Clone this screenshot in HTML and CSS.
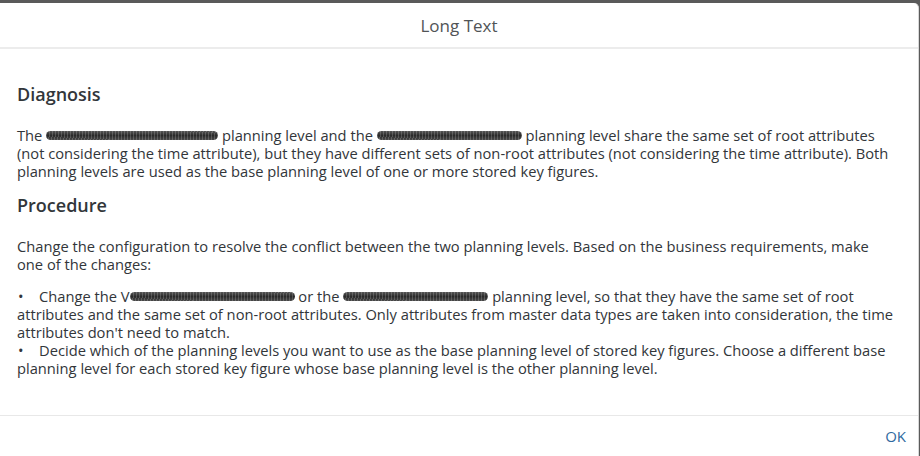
FILE: index.html
```html
<!DOCTYPE html>
<html lang="en">
<head>
  <meta charset="UTF-8">
  <title>Long Text</title>
  <link rel="stylesheet" href="styles.css">
</head>
<body>

  <div class="dialog">
    <div class="dialog-header">
      <h1>Long Text</h1>
    </div>

    <div class="dialog-content">
      <h2>Diagnosis</h2>
      <p>The <span class="redacted r1"></span> planning level and the <span class="redacted r2"></span> planning level share the same set of root attributes (not considering the time attribute), but they have different sets of non-root attributes (not considering the time attribute). Both planning levels are used as the base planning level of one or more stored key figures.</p>

      <h2>Procedure</h2>
      <p>Change the configuration to resolve the conflict between the two planning levels. Based on the business requirements, make one of the changes:</p>

      <ul class="items">
        <li>Change the V<span class="redacted r3"></span> or the <span class="redacted r4"></span> planning level, so that they have the same set of root attributes and the same set of non-root attributes. Only attributes from master data types are taken into consideration, the time attributes don't need to match.</li>
        <li>Decide which of the planning levels you want to use as the base planning level of stored key figures. Choose a different base planning level for each stored key figure whose base planning level is the other planning level.</li>
      </ul>
    </div>

    <div class="dialog-footer">
      <button class="ok-btn">OK</button>
    </div>
  </div>

</body>
</html>
```

FILE: styles.css
```css
body {
  margin: 0;
  background: #5a5a5a;
  font-family: 'Open Sans', 'Noto Sans', sans-serif;
  color: #32363a;
}

.dialog {
  margin-top: 3px;
  width: 918px;
  height: 453px;
  background: white;
  border-right: 1px solid #d8d8d8;
  border-top-right-radius: 5px;
  display: flex;
  flex-direction: column;
}

.dialog-header {
  height: 44px;
  border-bottom: 2px solid #ececec;
  display: flex;
  align-items: center;
  justify-content: center;
}

.dialog-header h1 {
  margin: 0;
  font-size: 17px;
  font-weight: normal;
  color: #515456;
}

.dialog-content {
  flex: 1;
  padding: 29px 23px 0 17px;
  font-size: 14.7px;
  line-height: 18px;
}

.dialog-content h2 {
  margin: 5px 0 21px;
  font-size: 18px;
  line-height: 22px;
  font-weight: 600;
}

.dialog-content p {
  margin: 0 0 14px;
}

.items {
  list-style: none;
  margin: 0;
  padding: 0;
}

.items li::before {
  content: "•";
  display: inline-block;
  width: 21px;
  padding-left: 1px;
}

.redacted {
  display: inline-block;
  height: 9px;
  border-radius: 5px;
  vertical-align: 1px;
  background:
    repeating-linear-gradient(95deg, rgba(255,255,255,0.18) 0, rgba(255,255,255,0.18) 1px, transparent 1px, transparent 3px),
    linear-gradient(#555, #2a2a2a 50%, #4a4a4a);
}

.r1 { width: 172px; }
.r2 { width: 145px; }
.r3 { width: 165px; }
.r4 { width: 145px; }

.dialog-footer {
  height: 40px;
  border-top: 1px solid #e8e8e8;
  display: flex;
  align-items: center;
  justify-content: flex-end;
  padding-right: 12px;
}

.ok-btn {
  border: none;
  background: none;
  padding: 0;
  font-family: inherit;
  font-size: 15px;
  color: #2f6aa0;
  cursor: pointer;
}
```
